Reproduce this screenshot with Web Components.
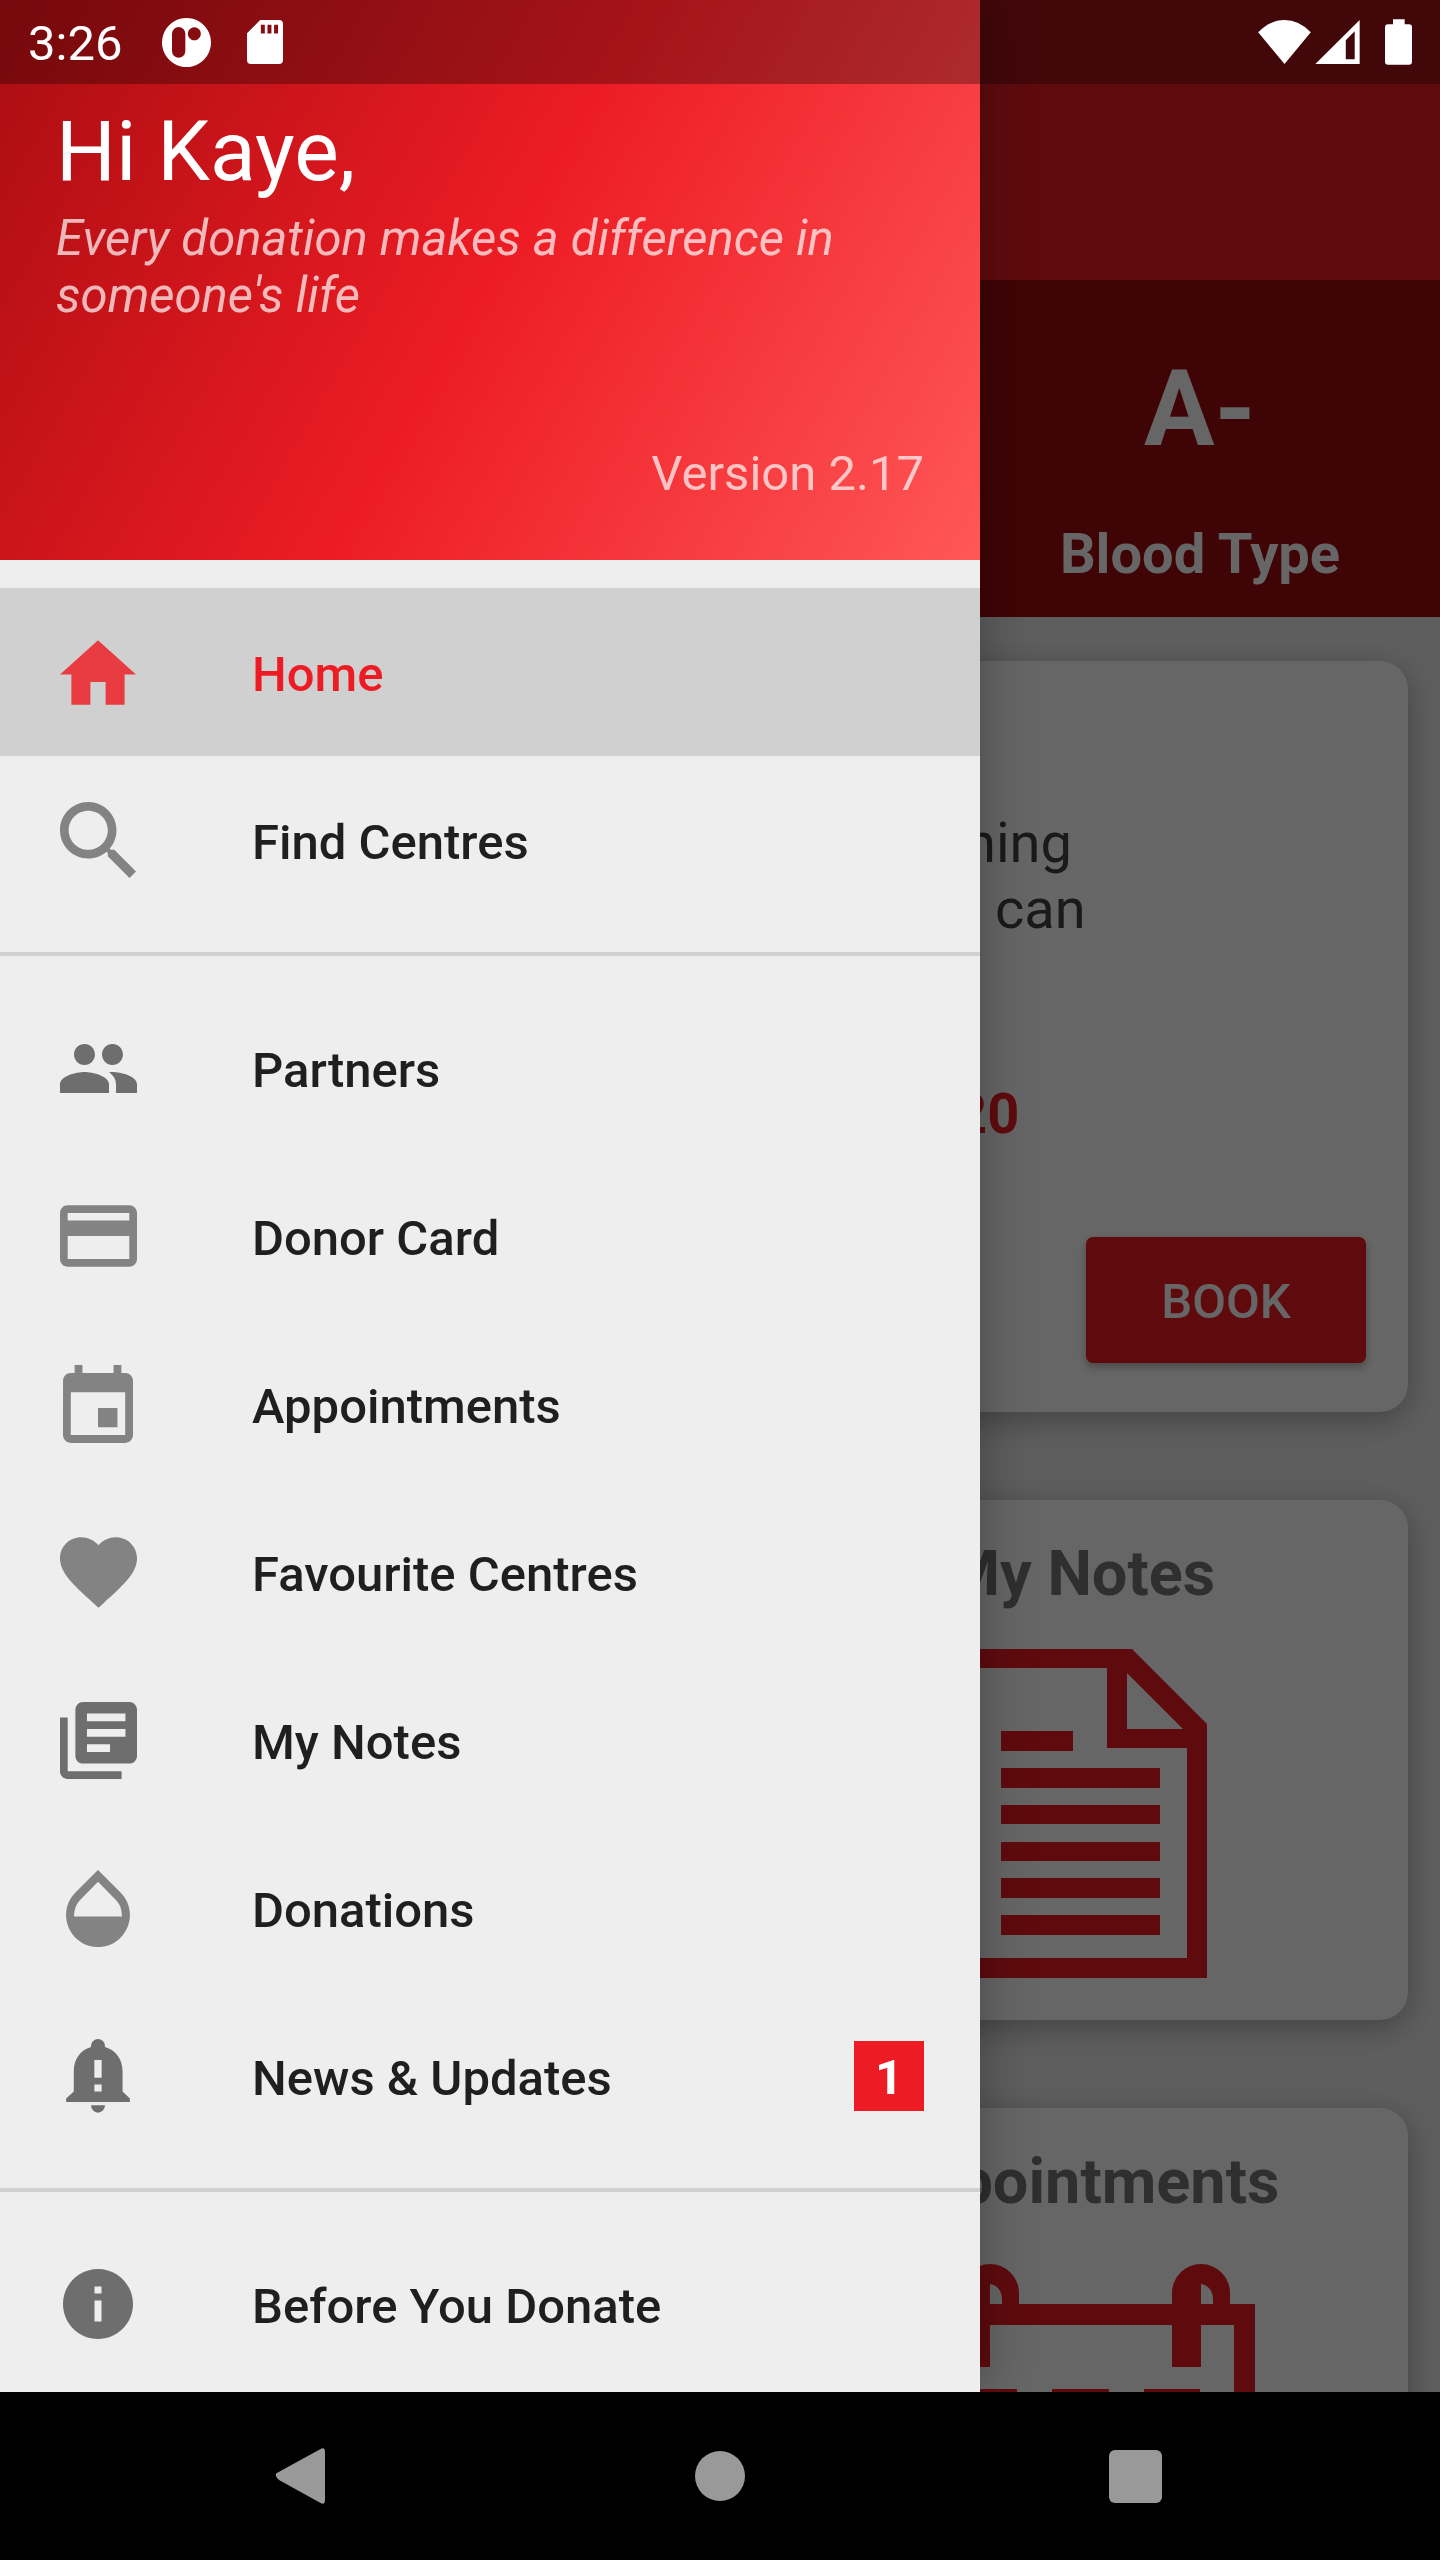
<!DOCTYPE html>
<html lang="en">
<head>
<meta charset="utf-8">
<meta name="viewport" content="width=device-width, initial-scale=1">
<title>Donor App</title>
<style>
  html, body { margin: 0; height: 100%; }
  body { font-family: Roboto, "Liberation Sans", sans-serif; font-size: 49px; background: #000; }
</style>
</head>
<body>
<phone-shell>
  <status-bar slot="status">3:26</status-bar>
  <home-screen slot="screen">
    <donor-stat slot="stat" label="Blood Type">A-</donor-stat>
    <next-donation slot="card">
      <span slot="first">ning</span>
      <span slot="second">can</span>
      <span slot="date">20</span>
      <span slot="action">BOOK</span>
    </next-donation>
    <feature-tile slot="tile" picture="notes">My Notes</feature-tile>
    <feature-tile slot="tile" picture="calendar">Appointments</feature-tile>
  </home-screen>
  <nav-drawer slot="drawer">
    <drawer-header slot="header">
      <span slot="greeting">Hi Kaye,</span>
      <span slot="message">Every donation makes a difference in someone's life</span>
      <span slot="version">Version 2.17</span>
    </drawer-header>
    <menu-group>
      <menu-item icon="home" active>Home</menu-item>
      <menu-item icon="search">Find Centres</menu-item>
    </menu-group>
    <menu-group>
      <menu-item icon="people" dark>Partners</menu-item>
      <menu-item icon="card">Donor Card</menu-item>
      <menu-item icon="event">Appointments</menu-item>
      <menu-item icon="heart">Favourite Centres</menu-item>
      <menu-item icon="library" dark>My Notes</menu-item>
      <menu-item icon="drop">Donations</menu-item>
      <menu-item icon="bell" dark count="1">News &amp; Updates</menu-item>
    </menu-group>
    <menu-group>
      <menu-item icon="info" dark>Before You Donate</menu-item>
    </menu-group>
  </nav-drawer>
  <system-nav slot="nav"></system-nav>
</phone-shell>

<script>
const define = (name, render) => customElements.define(name, class extends HTMLElement {
  constructor() {
    super();
    this.attachShadow({ mode: "open" });
  }
  connectedCallback() {
    this.shadowRoot.innerHTML = render(this);
  }
});

/* [viewBox, width, height, shapes] */
const ICONS = {
  home: ["2 3 20 17", 76, 65, '<path d="M10 20v-6h4v6h5v-8h3L12 3 2 12h3v8z"/>'],
  search: ["3 3 17.49 17.49", 76, 76, '<path d="M15.5 14h-.79l-.28-.27C15.41 12.59 16 11.11 16 9.5 16 5.91 13.09 3 9.5 3S3 5.91 3 9.5 5.91 16 9.5 16c1.61 0 3.09-.59 4.23-1.57l.27.28v.79l5 4.99L20.49 19l-4.99-5zm-6 0C7.01 14 5 11.99 5 9.5S7.01 5 9.5 5 14 7.01 14 9.5 11.99 14 9.5 14z"/>'],
  people: ["1 5 22 14", 77, 49, '<path d="M16 11c1.66 0 2.99-1.34 2.99-3S17.66 5 16 5s-3 1.34-3 3 1.34 3 3 3zm-8 0c1.66 0 2.99-1.34 2.99-3S9.66 5 8 5 5 6.34 5 8s1.34 3 3 3zm0 2c-2.33 0-7 1.17-7 3.5V19h14v-2.5c0-2.33-4.67-3.5-7-3.5zm8 0c-.29 0-.62.02-.97.05 1.16.84 1.97 1.97 1.97 3.45V19h6v-2.5c0-2.33-4.67-3.5-7-3.5z"/>'],
  card: ["2 4 20 16", 77, 62, '<path d="M20 4H4c-1.11 0-1.99.89-1.99 2L2 18c0 1.11.89 2 2 2h16c1.11 0 2-.89 2-2V6c0-1.11-.89-2-2-2zm0 14H4v-6h16v6zm0-10H4V6h16v2z"/>'],
  event: ["3 1 18 20", 70, 78, '<path d="M17 12h-5v5h5v-5zM16 1v2H8V1H6v2H5c-1.11 0-1.99.9-1.99 2L3 19c0 1.1.89 2 2 2h14c1.1 0 2-.9 2-2V5c0-1.1-.9-2-2-2h-1V1h-2zm3 18H5V8h14v11z"/>'],
  heart: ["2 3 20 18.35", 77, 71, '<path d="M12 21.35l-1.45-1.32C5.4 15.36 2 12.28 2 8.5 2 5.42 4.42 3 7.5 3c1.74 0 3.41.81 4.5 2.09C13.09 3.81 14.76 3 16.5 3 19.58 3 22 5.42 22 8.5c0 3.78-3.4 6.86-8.55 11.54L12 21.35z"/>'],
  library: ["2 2 20 20", 77, 77, '<path d="M4 6H2v14c0 1.1.9 2 2 2h14v-2H4V6zm16-4H8c-1.1 0-2 .9-2 2v12c0 1.1.9 2 2 2h12c1.1 0 2-.9 2-2V4c0-1.1-.9-2-2-2zm-1 9H9V9h10v2zm-4 4H9v-2h6v2zm4-8H9V5h10v2z"/>'],
  drop: ["4 2.35 16 19.3", 64, 77, '<path d="M17.66 8L12 2.35 6.34 8C4.78 9.56 4 11.64 4 13.64s.78 4.11 2.34 5.67 3.61 2.35 5.66 2.35 4.1-.79 5.66-2.35S20 15.64 20 13.64 19.22 9.56 17.66 8zM6 14c.01-2 .62-3.27 1.76-4.4L12 5.27l4.24 4.38C17.38 10.77 17.99 12 18 14H6z"/>'],
  bell: ["48 32 192 223", 64, 74, '<path fill-rule="evenodd" d="M48 222V211L71 190V130C71 92 91 65 123 56V52a21 20 0 0 1 42 0V56C197 65 218 92 218 130V190L240 211V222zM133 95h22v54h-22zM133 169h22v21h-22zM123 232h42a21 22 0 0 1-42 0z"/>'],
  info: ["2 2 20 20", 70, 70, '<path d="M12 2C6.48 2 2 6.48 2 12s4.48 10 10 10 10-4.48 10-10S17.52 2 12 2zm1 15h-2v-6h2v6zm0-8h-2V7h2v2z"/>']
};

const PICTURES = {
  notes: '<svg width="254" height="329" viewBox="0 0 254 329" aria-hidden="true"><path fill-rule="evenodd" d="M0 0H179L254 75V329H0zM19 19V309H234V99H154V19zM174 24V80H230z"/><path d="M48 82h72v20H48zM48 119h159v20H48zM48 156h159v19H48zM48 193h159v19H48zM48 229h159v20H48zM48 266h159v20H48z"/></svg>',
  calendar: '<svg width="350" height="329" viewBox="0 0 350 329" aria-hidden="true"><path fill-rule="evenodd" d="M0 47H350V329H0zM21 68V308H329V68z"/><path fill-rule="evenodd" d="M56 110V36a29 29 0 0 1 58 0V48H97V42C97 34 92 28 85 27V110z"/><path fill-rule="evenodd" d="M267 110V36a29 29 0 0 1 58 0V48H308V42C308 34 303 28 296 27V110z"/><path d="M55 132h57v50H55zM147 132h57v50h-57zM239 132h56v50h-56zM55 214h57v50H55zM147 214h57v50h-57zM239 214h56v50h-56z"/></svg>'
};

define("phone-shell", () => `
  <style>
    :host { display: flex; flex-direction: column; height: 100vh; position: relative; overflow: hidden; }
    .stage { flex: 1; min-height: 0; position: relative; overflow: hidden; }
    .scrim { position: absolute; inset: 0; background: rgba(0, 0, 0, .6); }
    .drawer { position: absolute; top: 0; bottom: 0; left: 0; width: min(980px, 85%); box-shadow: 0 0 50px rgba(0, 0, 0, .3); }
    .status { position: absolute; top: 0; left: 0; right: 0; }
  </style>
  <div class="stage">
    <slot name="screen"></slot>
    <div class="scrim"></div>
    <div class="drawer"><slot name="drawer"></slot></div>
    <div class="status"><slot name="status"></slot></div>
  </div>
  <slot name="nav"></slot>`);

define("status-bar", () => `
  <style>
    :host { display: flex; align-items: center; justify-content: space-between; height: 84px; box-sizing: border-box;
      padding: 0 28px; color: #fff; background: rgba(0, 0, 0, .3); line-height: 58px; }
    div { display: flex; align-items: center; }
    .left { gap: 36px; }
    .right { gap: 4px; }
    .battery { margin-left: 21px; }
    svg { display: block; fill: currentColor; }
    time { padding: 4px 4px 0 0; }
  </style>
  <div class="left">
    <time><slot></slot></time>
    <svg width="49" height="49" viewBox="69 54 147 147" aria-hidden="true"><path fill-rule="evenodd" d="M142.500 54a73.500 73.500 0 1 0 .01 0zM99 101a20 20 0 0 1 40 0v52a20 20 0 0 1-40 0zM166 82a19.500 19.500 0 1 1-.01 0z"/></svg>
    <svg width="36" height="44" viewBox="318 60 109 133" aria-hidden="true"><path fill-rule="evenodd" d="M358 60H415Q427 60 427 72V181Q427 193 415 193H330Q318 193 318 181V100zM360 74v27h12V74zM380 74v27h12V74zM400 74v27h12V74z"/></svg>
  </div>
  <div class="right">
    <svg width="53" height="44" viewBox="54 57 159 133" aria-hidden="true"><path d="M54 94Q90 57 133.500 57T213 94L133.500 190z"/></svg>
    <svg width="45" height="44" viewBox="226 58 134 133" aria-hidden="true"><path fill-rule="evenodd" d="M360 58V191H226zM345 92L318 119V177H345z"/></svg>
    <svg class="battery" width="27" height="46" viewBox="435 57 81 137" aria-hidden="true"><path d="M459 57h35v15h13q9 0 9 9v104q0 9-9 9h-63q-9 0-9-9V81q0-9 9-9h15z"/></svg>
  </div>`);

define("home-screen", () => `
  <style>
    :host { display: block; background: #ececec; }
    header { background: #ed1c24; height: 196px; padding-top: 84px; }
    .stats { display: grid; grid-template-columns: repeat(3, 1fr); background: #9f0b10; padding: 68px 0 30px; }
    .stats ::slotted(*) { grid-column: 3; }
    .feed { display: grid; grid-template-columns: 1fr 1fr; gap: 88px 64px; padding: 44px 32px; }
    ::slotted([slot=card]) { grid-column: 1 / -1; }
    ::slotted([slot=tile]) { grid-column: 2; }
  </style>
  <header></header>
  <section class="stats"><slot name="stat"></slot></section>
  <main class="feed"><slot name="card"></slot><slot name="tile"></slot></main>`);

define("donor-stat", el => `
  <style>
    :host { display: flex; flex-direction: column; align-items: center; gap: 50px; color: #fff; font-weight: 700; }
    .value { font-size: 105px; line-height: 123px; }
    .label { font-size: 56px; line-height: 66px; }
  </style>
  <div class="value"><slot></slot></div>
  <div class="label">${el.getAttribute("label")}</div>`);

const CARD = "background: #fff; border-radius: 28px; box-shadow: 0 8px 32px rgba(0, 0, 0, .3);";

define("next-donation", () => `
  <style>
    :host { display: flex; flex-direction: column; justify-content: space-between; box-sizing: border-box;
      ${CARD} padding: 149px 42px 49px 32px; font-size: 56px; line-height: 66px; color: #424242; }
    p { margin: 0; }
    .first { padding-left: 901px; }
    .second { padding-left: 931px; }
    .date { padding: 139px 0 90px 891px; color: #ed1c24; font-weight: 700; }
    button { align-self: flex-end; width: 280px; height: 126px; border: 0; border-radius: 7px; background: #ed1c24; color: #fff;
      padding: 4px 0 0; font: 500 49px/58px Roboto, sans-serif; box-shadow: 0 4px 8px rgba(0, 0, 0, .3); }
  </style>
  <p class="first"><slot name="first"></slot></p>
  <p class="second"><slot name="second"></slot></p>
  <p class="date"><slot name="date"></slot></p>
  <button type="button"><slot name="action"></slot></button>`);

define("feature-tile", el => `
  <style>
    :host { display: flex; flex-direction: column; align-items: center; gap: 38px; box-sizing: border-box;
      ${CARD} padding: 37px 0 42px; color: #757575; }
    h2 { margin: 0; font-size: 63px; line-height: 74px; font-weight: 700; }
    svg { display: block; fill: #ed1c24; }
  </style>
  <h2><slot></slot></h2>
  ${PICTURES[el.getAttribute("picture")]}`);

define("nav-drawer", () => `
  <style>
    :host { display: block; height: 100%; overflow: hidden; background: #eee; }
  </style>
  <slot name="header"></slot>
  <nav><slot></slot></nav>`);

define("drawer-header", () => `
  <style>
    :host { display: flex; flex-direction: column; height: 560px; box-sizing: border-box; padding: 103px 56px 58px;
      background: linear-gradient(120deg, #a90d11, #ed1c24 50%, #ff5757); color: #fff; }
    h1 { margin: 0 0 9px; font-size: 84px; line-height: 98px; font-weight: 400; }
    p { margin: 0; line-height: 57px; color: rgba(255, 255, 255, .7); }
    .message { font-style: italic; }
    .version { margin-top: auto; text-align: right; }
  </style>
  <h1><slot name="greeting"></slot></h1>
  <p class="message"><slot name="message"></slot></p>
  <p class="version"><slot name="version"></slot></p>`);

define("menu-group", () => `
  <style>
    :host { display: block; padding: 28px 0; }
    :host(:not(:last-of-type)) { border-bottom: 4px solid #d0d0d0; }
  </style>
  <slot></slot>`);

define("menu-item", el => {
  const [box, w, h, shapes] = ICONS[el.getAttribute("icon")];
  const count = el.getAttribute("count");
  return `
  <style>
    :host { display: block; --icon: #838383; --ink: #1f1f1f; }
    :host([dark]) { --icon: #6e6e6e; }
    :host([active]) { --icon: #e93b42; --ink: #ed1c24; background: #d0d0d0; }
    a { display: flex; align-items: center; height: 168px; box-sizing: border-box; padding: 0 56px; color: var(--ink);
      text-decoration: none; font-weight: 500; line-height: 58px; }
    .icon { display: flex; justify-content: center; width: 84px; margin-right: 112px; }
    svg { display: block; fill: var(--icon); }
    .text { flex: 1; padding-top: 5px; }
    .count { width: 70px; line-height: 70px; padding-top: 2px; box-sizing: border-box; height: 70px; text-align: center; background: #ed1c24; color: #fff; font-weight: 700; }
  </style>
  <a href="#${el.getAttribute("icon")}">
    <span class="icon"><svg width="${w}" height="${h}" viewBox="${box}" aria-hidden="true">${shapes}</svg></span>
    <span class="text"><slot></slot></span>
    ${count ? `<span class="count">${count}</span>` : ""}
  </a>`;
});

define("system-nav", () => `
  <style>
    :host { display: flex; justify-content: center; height: 168px; background: #000; }
    button { width: 415px; border: 0; padding: 0; background: none; display: flex; align-items: center; justify-content: center; }
    svg { display: block; fill: #999; }
  </style>
  <button type="button" aria-label="Back"><svg width="62" height="58" viewBox="0 0 62 58"><path d="M2 26.500L47 1.800Q51 0 51 5V53Q51 58 47 56.200L5 33Q1 29.500 2 26.500z"/></svg></button>
  <button type="button" aria-label="Home"><svg width="50" height="50" viewBox="0 0 50 50"><circle cx="25" cy="25" r="25"/></svg></button>
  <button type="button" aria-label="Recent apps"><svg width="53" height="53" viewBox="0 0 53 53"><rect width="53" height="53" rx="6"/></svg></button>`);
</script>
</body>
</html>
